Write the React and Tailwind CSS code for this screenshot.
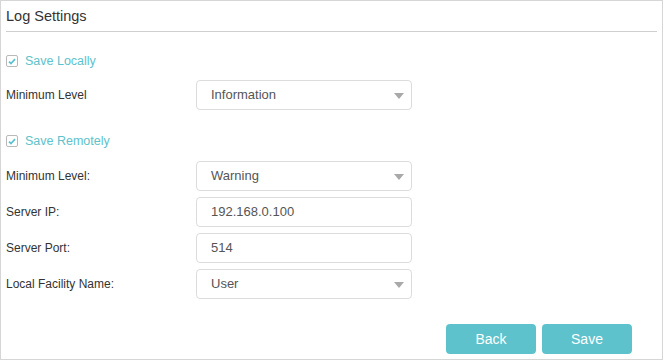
import React from 'react';

const font = { fontFamily: '"Liberation Sans", Arial, sans-serif' };

function Check({ label }) {
  return (
    <label className="flex h-[30px] items-center">
      <span className="flex h-[12px] w-[12px] items-center justify-center rounded-[2px] border border-[#b9b9b9] bg-white">
        <svg width="8" height="7" viewBox="0 0 8 7">
          <path d="M1 3.6 L3 5.5 L7 1.2" fill="none" stroke="#5ec2cc" strokeWidth="1.8" />
        </svg>
      </span>
      <span className="ml-[7px] text-[12.5px] text-[#5ec2cc]">{label}</span>
    </label>
  );
}

function Arrow() {
  return (
    <svg width="10" height="6" viewBox="0 0 10 6" className="absolute right-[7px] top-[12px]">
      <path d="M0 0 H10 L5 6 Z" fill="#a9a9a9" />
    </svg>
  );
}

function Field({ label, value, select }) {
  return (
    <div className="flex h-[30px] items-center">
      <span className="w-[190px] text-[12px] text-[#333]">{label}</span>
      <div className="relative flex h-[30px] w-[216px] items-center rounded-[4px] border border-[#dcdcdc] bg-white pl-[14px] text-[13px] text-[#555]">
        {value}
        {select && <Arrow />}
      </div>
    </div>
  );
}

export default function App() {
  return (
    <div style={font} className="h-[360px] w-[663px] border border-[#d6d6d6] bg-white px-[5px]">
      <div className="h-[31px] border-b border-[#cfcfcf]">
        <h2 className="text-[14.5px] leading-[30px] text-[#333]">Log Settings</h2>
      </div>

      <div className="mt-[14px]">
        <Check label="Save Locally" />
      </div>
      <div className="mt-[4px]">
        <Field label="Minimum Level" value="Information" select />
      </div>

      <div className="mt-[16px]">
        <Check label="Save Remotely" />
      </div>
      <div className="mt-[5px] flex flex-col gap-[6px]">
        <Field label="Minimum Level:" value="Warning" select />
        <Field label="Server IP:" value="192.168.0.100" />
        <Field label="Server Port:" value="514" />
        <Field label="Local Facility Name:" value="User" select />
      </div>

      <div className="mr-[25px] mt-[25px] flex justify-end gap-[6px]">
        <button className="h-[30px] w-[90px] rounded-[4px] bg-[#5ec2cc] text-[14px] text-white">Back</button>
        <button className="h-[30px] w-[90px] rounded-[4px] bg-[#5ec2cc] text-[14px] text-white">Save</button>
      </div>
    </div>
  );
}
